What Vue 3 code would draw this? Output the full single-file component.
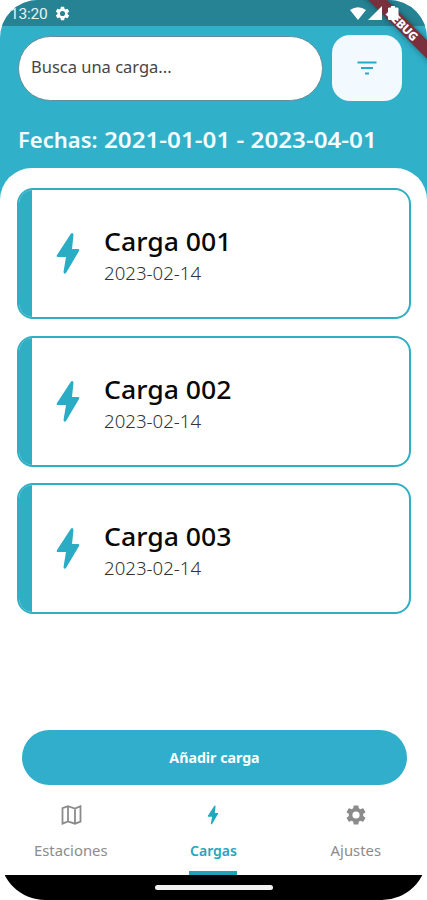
<script setup>
const cargas = [
  { name: 'Carga 001', date: '2023-02-14' },
  { name: 'Carga 002', date: '2023-02-14' },
  { name: 'Carga 003', date: '2023-02-14' },
]
const gear = 'M19.14 12.94c.04-.3.06-.61.06-.94s-.02-.64-.07-.94l2.03-1.58a.49.49 0 0 0 .12-.61l-1.92-3.32a.49.49 0 0 0-.59-.22l-2.39.96a7 7 0 0 0-1.62-.94l-.36-2.54a.48.48 0 0 0-.48-.41h-3.84a.48.48 0 0 0-.47.41l-.36 2.54a7.3 7.3 0 0 0-1.62.94l-2.39-.96a.48.48 0 0 0-.59.22L2.74 8.87a.48.48 0 0 0 .12.61l2.03 1.58a6 6 0 0 0 0 1.88l-2.03 1.58a.49.49 0 0 0-.12.61l1.92 3.32c.12.22.37.29.59.22l2.39-.96c.5.38 1.03.7 1.62.94l.36 2.54c.05.24.24.41.48.41h3.84c.24 0 .44-.17.47-.41l.36-2.54a7.3 7.3 0 0 0 1.62-.94l2.39.96c.22.08.47 0 .59-.22l1.92-3.32a.48.48 0 0 0-.12-.61zM12 15.6a3.6 3.6 0 1 1 0-7.2 3.6 3.6 0 0 1 0 7.2z'
const bolt = 'M15 1.500 1 23q-1 2 1 2h8L7.500 40q.5 3 2.500 1L23 19q1-2-1-2h-6l1.500-14q-.5-3-2.500-1.500z'
</script>

<template>
  <div class="phone">
    <header class="status">
      <span class="time">13:20</span>
      <svg class="status-gear" viewBox="0 0 24 24"><path :d="gear" /></svg>
      <svg class="signals" viewBox="0 0 50 16">
        <path d="M0 4Q8-1.500 16 4L8 14zM32 0v14H18zM41 0h4v1.500h2q1.500 0 1.500 1V13q0 1-1 1h-8.500q-1 0-1-1V2.500q0-1 1.500-1h1.500z" />
      </svg>
    </header>
    <div class="debug"><span>DEBUG</span></div>

    <section class="top">
      <div class="search-row">
        <div class="search"><span>Busca una carga...</span></div>
        <button class="filter">
          <svg viewBox="0 0 20 14"><path d="M.5 1.500h19M4 7h12M8 12.500h4" /></svg>
        </button>
      </div>
      <h1>Fechas: <span>2021-01-01 - 2023-04-01</span></h1>
    </section>

    <main class="sheet">
      <article v-for="c in cargas" :key="c.name" class="card">
        <svg class="bolt" viewBox="0 0 24 43"><path :d="bolt" /></svg>
        <div>
          <h2><span>{{ c.name }}</span></h2>
          <p><span>{{ c.date }}</span></p>
        </div>
      </article>
      <button class="add"><span>Añadir carga</span></button>
    </main>

    <nav>
      <div class="tab">
        <svg class="map" viewBox="0 0 20 20"><path d="M1 3.200 6.500 1.200 13.500 3.500 19 1.200V16.700L13.500 18.700 6.500 16.500 1 18.700zM6.500 1.200V16.500M13.500 3.500V18.700" /></svg>
        <span class="wide">Estaciones</span>
      </div>
      <div class="tab active">
        <svg class="small-bolt" viewBox="0 0 24 43"><path :d="bolt" /></svg>
        <span>Cargas</span>
      </div>
      <div class="tab">
        <svg class="nav-gear" viewBox="0 0 24 24"><path :d="gear" /></svg>
        <span class="wide">Ajustes</span>
      </div>
    </nav>
    <footer><i></i></footer>
  </div>
</template>

<style>
body { margin: 0; background: #fff; }
</style>

<style scoped>
* { box-sizing: border-box; }
.phone {
  position: relative;
  width: 427px;
  height: 900px;
  overflow: hidden;
  display: flex;
  flex-direction: column;
  border-radius: 38px 38px 45px 45px;
  background: linear-gradient(#30b0c9 0 50%, #fff 50%);
  font-family: "Noto Sans", "Open Sans", sans-serif;
}
svg { display: block; fill: currentColor; }
h1, h2, p { margin: 0; white-space: nowrap; }
h1 span, h2 span, p span, .search span { display: inline-block; transform-origin: left; }
button { border: 0; padding: 0; font-family: inherit; }
.status {
  height: 26px;
  flex: none;
  display: flex;
  align-items: center;
  padding: 1px 27px 0 10px;
  background: #268394;
  color: #fff;
}
.time { font: 400 15.500px/26px Roboto, sans-serif; letter-spacing: -.2px; opacity: .9; }
.status-gear { width: 17px; height: 17px; margin-left: 6px; }
.signals { position: relative; z-index: 2; width: 50px; height: 16px; margin-left: auto; }
.debug {
  position: absolute;
  z-index: 1;
  top: 18px;
  right: -55px;
  width: 160px;
  height: 13px;
  transform: rotate(45deg);
  background: #7a303c;
  box-shadow: 0 0 6px #0006;
  color: #fff;
  font: 800 12px/13px "Noto Sans", sans-serif;
  letter-spacing: -.4px;
  text-align: center;
}
.top { height: 142px; flex: none; padding: 9px 25px 0 18px; }
.search-row { display: flex; align-items: center; justify-content: space-between; }
.search {
  width: 305px;
  height: 65px;
  border: 1px solid #668c96;
  border-radius: 33px;
  background: #fff;
  padding-left: 12px;
  font-size: 16px;
  line-height: 60px;
  color: #454545;
}
.search span { transform: scaleX(1.030); }
.filter {
  width: 70px;
  height: 66px;
  border-radius: 18px;
  background: #f2f9ff;
  display: grid;
  place-items: center;
}
.filter svg { width: 20px; height: 14px; fill: none; stroke: #28a9c4; stroke-width: 2; }
h1 { margin-top: 22px; font-size: 22px; line-height: 32px; font-weight: 600; color: #f4fdff; }
h1 span { transform: scaleX(1.100); margin-left: 1px; }
.sheet {
  height: 623px;
  flex: none;
  display: flex;
  flex-direction: column;
  gap: 16.500px;
  padding: 20px 16px 0 17px;
  border-radius: 32px 32px 0 0;
  background: #fff;
}
.card {
  height: 131px;
  flex: none;
  display: flex;
  align-items: center;
  overflow: hidden;
  border: 2px solid #30aec4;
  border-radius: 16px;
}
.card::before { content: ""; width: 13px; align-self: stretch; background: #30aec4; margin-right: 24px; }
.bolt { width: 24px; height: 43px; margin-right: 24px; color: #29acc4; }
h2 { margin-top: 5px; font-size: 25px; line-height: 32px; font-weight: 500; color: #080808; }
h2 span { transform: scaleX(1.065); }
p { font-size: 18px; line-height: 28px; font-weight: 300; color: #333; margin-top: 2px; }
p span { transform: scaleX(1.035); }
.add {
  width: 385px;
  height: 55px;
  margin: 99px 0 0 5px;
  border-radius: 28px;
  background: #30aecb;
  color: #fff;
  font-size: 14.200px;
  font-weight: 700;
}
nav { height: 84px; flex: none; display: grid; grid-template-columns: repeat(3, 1fr); background: #fff; }
.tab {
  position: relative;
  display: flex;
  flex-direction: column;
  align-items: center;
  padding-top: 14px;
  color: #8b8b8b;
  font-size: 14px;
  line-height: 20px;
}
.tab svg { height: 20px; margin: 0 0 16px; }
.wide { transform: scaleX(1.060); }
.map { width: 21px; fill: none; stroke: currentColor; stroke-width: 1.800; }
.small-bolt { width: 12px; }
.nav-gear { width: 24px; transform: scale(1.200); }
.active { color: #23a6bf; font-weight: 600; }
.active::after { content: ""; position: absolute; bottom: 0; width: 48px; height: 4px; background: #21a2b9; }
footer { height: 25px; flex: none; background: #000; display: flex; justify-content: center; padding-top: 10px; }
footer i { width: 118px; height: 5px; border-radius: 3px; background: #f2f2f2; }
</style>
